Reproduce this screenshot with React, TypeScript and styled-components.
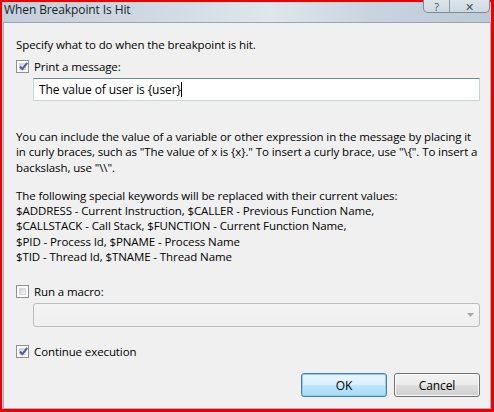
import React from "react";
import styled, { createGlobalStyle } from "styled-components";

const Global = createGlobalStyle`
  html, body { margin: 0; padding: 0; background: #e00000; }
  body { font-family: "Open Sans", "Noto Sans", sans-serif; }
  * { box-sizing: border-box; }
`;

const Frame = styled.div`
  width: 494px;
  height: 412px;
  background: #ee0000;
  padding: 2px 3px 3px 2px;
  display: flex;
  overflow: hidden;
`;

const Window = styled.div`
  flex: 1;
  min-width: 0;
  display: flex;
  flex-direction: column;
  background: linear-gradient(90deg, #c4cfdb 0%, #cfd9e3 30%, #dfe6ed 55%, #c9d4df 75%, #bccad7 100%);
  position: relative;
`;

const TitleBar = styled.div`
  height: 20px;
  display: flex;
  align-items: flex-start;
  padding: 0 0 0 2px;
  font-size: 12px;
  line-height: 15px;
  color: #1e1e1e;
  letter-spacing: -0.1px;
`;

const Caption = styled.div`
  position: absolute;
  top: -2px;
  right: 1px;
  display: flex;
  height: 13px;
  border: 1px solid #7d8a98;
  border-top: none;
  border-radius: 0 0 5px 5px;
  overflow: hidden;
  background: linear-gradient(#dde4eb, #cfd8e1);
`;

const CapBtn = styled.div<{ $w: number }>`
  width: ${(p) => p.$w}px;
  display: flex;
  align-items: flex-end;
  justify-content: center;
  font-size: 11px;
  color: #46505c;
  line-height: 11px;
  & + & { border-left: 1px solid #8f9aa6; }
`;

const Client = styled.div`
  flex: 1;
  min-width: 0;
  overflow: hidden;
  margin: 0 0 0 1px;
  background: #f0f0f0;
  border-top: 1px solid #9aa5b1;
  border-left: 1px solid #a8b2bc;
  border-right: 1px solid #a8b2bc;
  border-bottom: 1px solid #a8b2bc;
  padding: 14px 10px 0 12px;
  display: flex;
  flex-direction: column;
  font-size: 11.5px;
  letter-spacing: -0.1px;
  color: #000;
`;

const Line = styled.div`
  line-height: 15px;
  height: 15px;
  white-space: nowrap;
`;

const Para = styled.div<{ $top: number }>`
  margin-top: ${(p) => p.$top}px;
  line-height: 15.3px;
  white-space: nowrap;
`;

const CheckRow = styled.div<{ $top: number }>`
  display: flex;
  align-items: center;
  gap: 5px;
  margin-top: ${(p) => p.$top}px;
  height: 15px;
`;

const Box = styled.div`
  width: 13px;
  height: 13px;
  border: 1px solid #8e8f8f;
  background: #fff;
  padding: 2px;
  display: flex;
`;

const BoxInner = styled.div`
  flex: 1;
  background: linear-gradient(135deg, #cbcfd5 0%, #e7e9ec 60%, #f6f6f6 100%);
  border: 1px solid #d3d6da;
  position: relative;
`;

const Check = styled.svg`
  position: absolute;
  left: -2px;
  top: -3px;
`;

const Input = styled.div`
  margin: 4px 0 0 17px;
  height: 23px;
  background: #fff;
  border: 1px solid #c6d4df;
  border-top-color: #6d8598;
  display: flex;
  align-items: center;
  padding-left: 5px;
  font-size: 12px;
  white-space: pre;
`;

const Caret = styled.span`
  display: inline-block;
  width: 1px;
  height: 15px;
  background: #000;
`;

const Combo = styled.div`
  margin: 4px 0 0 17px;
  height: 24px;
  background: linear-gradient(#f4f4f4, #efefef);
  border: 1px solid #bdbdbd;
  border-radius: 3px;
  display: flex;
  align-items: center;
  justify-content: flex-end;
  padding-right: 5px;
`;

const Buttons = styled.div`
  margin-top: 14px;
  display: flex;
  justify-content: flex-end;
  gap: 7px;
`;

const Button = styled.div<{ $default?: boolean }>`
  width: 86px;
  height: 24px;
  border-radius: 3px;
  display: flex;
  align-items: center;
  justify-content: center;
  font-size: 12px;
  color: #000;
  border: 1px solid ${(p) => (p.$default ? "#3c7fb1" : "#707070")};
  background: ${(p) =>
    p.$default
      ? "linear-gradient(#eaf6fd 0%, #d9f0fc 50%, #bee6fd 51%, #a7d9f5 100%)"
      : "linear-gradient(#f2f2f2 0%, #ebebeb 50%, #dddddd 51%, #cfcfcf 100%)"};
  box-shadow: inset 0 0 0 1px ${(p) => (p.$default ? "#93d0ef" : "#fcfcfc")};
`;

const CheckBox = ({ checked }: { checked: boolean }) => (
  <Box>
    <BoxInner>
      {checked && (
        <Check width="11" height="11" viewBox="0 0 11 11">
          <path d="M2 5.5 L4.3 8.2 L9.2 1.8" fill="none" stroke="#4d5f9a" strokeWidth="2" />
        </Check>
      )}
    </BoxInner>
  </Box>
);

export default function App() {
  return (
    <>
      <Global />
      <Frame>
        <Window>
          <TitleBar>When Breakpoint Is Hit</TitleBar>
          <Caption>
            <CapBtn $w={25}>?</CapBtn>
            <CapBtn $w={40}>✕</CapBtn>
          </Caption>
          <Client>
            <Line>Specify what to do when the breakpoint is hit.</Line>
            <CheckRow $top={7}>
              <CheckBox checked />
              <span>Print a message:</span>
            </CheckRow>
            <Input>
              The value of user is {"{user}"}
              <Caret />
            </Input>
            <Para $top={28}>
              You can include the value of a variable or other expression in the message by placing it
              <br />
              in curly braces, such as "The value of x is {"{x}"}." To insert a curly brace, use "\{"{"}". To insert a
              <br />
              backslash, use "\\".
            </Para>
            <Para $top={13}>
              The following special keywords will be replaced with their current values:
              <br />
              $ADDRESS - Current Instruction, $CALLER - Previous Function Name,
              <br />
              $CALLSTACK - Call Stack, $FUNCTION - Current Function Name,
              <br />
              $PID - Process Id, $PNAME - Process Name
              <br />
              $TID - Thread Id, $TNAME - Thread Name
            </Para>
            <CheckRow $top={20}>
              <CheckBox checked={false} />
              <span>Run a macro:</span>
            </CheckRow>
            <Combo>
              <svg width="7" height="4" viewBox="0 0 7 4">
                <path d="M0 0 H7 L3.5 4 Z" fill="#a8a8a8" />
              </svg>
            </Combo>
            <CheckRow $top={17}>
              <CheckBox checked />
              <span>Continue execution</span>
            </CheckRow>
            <Buttons>
              <Button $default>OK</Button>
              <Button>Cancel</Button>
            </Buttons>
          </Client>
        </Window>
      </Frame>
    </>
  );
}
